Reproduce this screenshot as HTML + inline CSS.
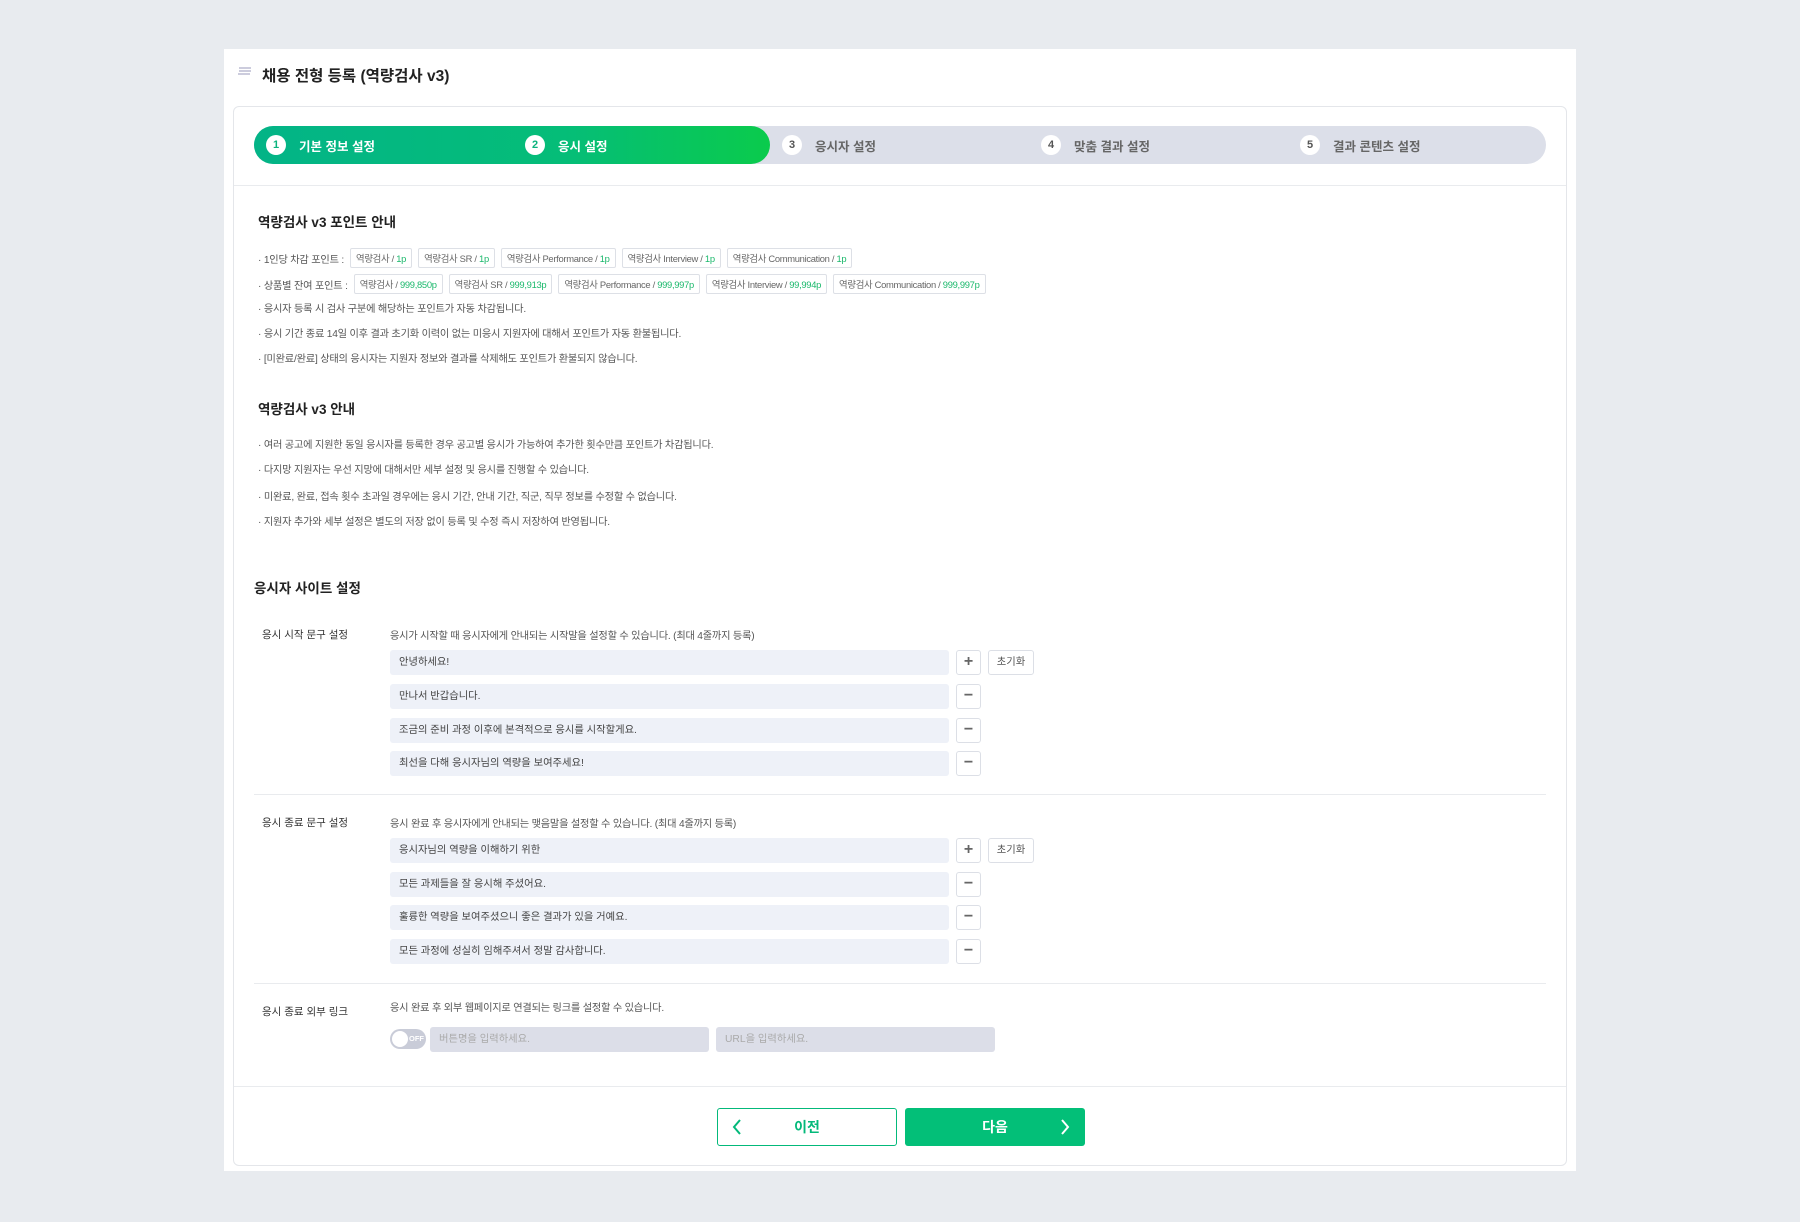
<!DOCTYPE html>
<html><head><meta charset="utf-8"><style>
*{box-sizing:border-box;margin:0;padding:0}
body{width:1800px;height:1222px;background:#e8ebef;font-family:"Liberation Sans","Noto Sans CJK KR",sans-serif;color:#333;position:relative;overflow:hidden}
.a{position:absolute}
.card{left:224px;top:49px;width:1352px;height:1122px;background:#fff}
.inner{left:233px;top:106px;width:1334px;height:1060px;border:1px solid #e4e6ea;border-radius:6px;background:#fff}
.step{top:126px;height:38px;display:flex;align-items:center;font-size:12.5px;font-weight:bold}
.circ{width:20px;height:20px;border-radius:50%;background:#fff;font-size:11px;font-weight:bold;display:flex;align-items:center;justify-content:center;margin-right:13px}
.h{font-size:13.5px;font-weight:bold;color:#222}
.ln{font-size:10.2px;color:#555;white-space:nowrap;display:flex;align-items:center;letter-spacing:-0.2px}
.tag{border:1px solid #dde0e6;border-radius:2px;padding:2px 5px;margin-left:6px;font-size:9.4px;color:#666;letter-spacing:-0.3px}
.g{color:#1ab86b}
.lab{font-size:10.5px;color:#333;left:262px}
.desc{font-size:10.2px;color:#555;left:390px;letter-spacing:-0.2px}
.inp{left:390px;width:559px;height:25px;background:#eef1f8;border-radius:3px;font-size:10.3px;color:#444;padding-left:9px;line-height:25px}
.pb{left:956px;width:25px;height:25px;border:1px solid #dcdfe6;border-radius:3px;background:#fff;text-align:center;line-height:22px;font-size:16px;color:#666;font-weight:bold}
.rb{left:988px;width:46px;height:25px;border:1px solid #dcdfe6;border-radius:3px;background:#fff;text-align:center;line-height:23px;font-size:10.3px;color:#555}
.hr{height:1px;background:#e9ebee}
</style></head><body>
<div class="a card"></div>
<div class="a" style="left:239px;top:67px;width:12px;height:1.5px;background:#ccd;box-shadow:0 3px 0 #ccd,-1px 6px 0 #ccd"></div>
<div class="a" style="left:262px;top:64px;font-size:15.5px;font-weight:bold;color:#222">채용 전형 등록 (역량검사 v3)</div>
<div class="a inner"></div>
<div class="a" style="left:254px;top:126px;width:1292px;height:38px;border-radius:19px;background:#dcdfe9"></div>
<div class="a" style="left:254px;top:126px;width:516px;height:38px;border-radius:19px;background:linear-gradient(90deg,#03b487 0%,#05bd78 60%,#0acb4c 100%)"></div>
<div class="a step" style="left:266px;color:#fff"><span class="circ" style="color:#0bb37d">1</span>기본 정보 설정</div>
<div class="a step" style="left:525px;color:#fff"><span class="circ" style="color:#0bb37d">2</span>응시 설정</div>
<div class="a step" style="left:782px;color:#666"><span class="circ" style="color:#555">3</span>응시자 설정</div>
<div class="a step" style="left:1041px;color:#666"><span class="circ" style="color:#555">4</span>맞춤 결과 설정</div>
<div class="a step" style="left:1300px;color:#666"><span class="circ" style="color:#555">5</span>결과 콘텐츠 설정</div>
<div class="a hr" style="left:234px;top:185px;width:1332px"></div>

<div class="a h" style="left:258px;top:211px">역량검사 v3 포인트 안내</div>
<div class="a ln" style="left:258px;top:248px">· 1인당 차감 포인트 : <span class="tag">역량검사 / <span class="g">1p</span></span><span class="tag">역량검사 SR / <span class="g">1p</span></span><span class="tag">역량검사 Performance / <span class="g">1p</span></span><span class="tag">역량검사 Interview / <span class="g">1p</span></span><span class="tag">역량검사 Communication / <span class="g">1p</span></span></div>
<div class="a ln" style="left:258px;top:274px">· 상품별 잔여 포인트 : <span class="tag">역량검사 / <span class="g">999,850p</span></span><span class="tag">역량검사 SR / <span class="g">999,913p</span></span><span class="tag">역량검사 Performance / <span class="g">999,997p</span></span><span class="tag">역량검사 Interview / <span class="g">99,994p</span></span><span class="tag">역량검사 Communication / <span class="g">999,997p</span></span></div>
<div class="a ln" style="left:258px;top:300px">· 응시자 등록 시 검사 구분에 해당하는 포인트가 자동 차감됩니다.</div>
<div class="a ln" style="left:258px;top:325px">· 응시 기간 종료 14일 이후 결과 초기화 이력이 없는 미응시 지원자에 대해서 포인트가 자동 환불됩니다.</div>
<div class="a ln" style="left:258px;top:350px">· [미완료/완료] 상태의 응시자는 지원자 정보와 결과를 삭제해도 포인트가 환불되지 않습니다.</div>

<div class="a h" style="left:258px;top:398px">역량검사 v3 안내</div>
<div class="a ln" style="left:258px;top:436px">· 여러 공고에 지원한 동일 응시자를 등록한 경우 공고별 응시가 가능하여 추가한 횟수만큼 포인트가 차감됩니다.</div>
<div class="a ln" style="left:258px;top:461px">· 다지망 지원자는 우선 지망에 대해서만 세부 설정 및 응시를 진행할 수 있습니다.</div>
<div class="a ln" style="left:258px;top:488px">· 미완료, 완료, 접속 횟수 초과일 경우에는 응시 기간, 안내 기간, 직군, 직무 정보를 수정할 수 없습니다.</div>
<div class="a ln" style="left:258px;top:513px">· 지원자 추가와 세부 설정은 별도의 저장 없이 등록 및 수정 즉시 저장하여 반영됩니다.</div>

<div class="a h" style="left:254px;top:577px">응시자 사이트 설정</div>

<div class="a lab" style="top:627px">응시 시작 문구 설정</div>
<div class="a desc" style="top:627px">응시가 시작할 때 응시자에게 안내되는 시작말을 설정할 수 있습니다. (최대 4줄까지 등록)</div>
<div class="a inp" style="top:650px">안녕하세요!</div><div class="a pb" style="top:650px">+</div><div class="a rb" style="top:650px">초기화</div>
<div class="a inp" style="top:684px">만나서 반갑습니다.</div><div class="a pb" style="top:684px">−</div>
<div class="a inp" style="top:718px">조금의 준비 과정 이후에 본격적으로 응시를 시작할게요.</div><div class="a pb" style="top:718px">−</div>
<div class="a inp" style="top:751px">최선을 다해 응시자님의 역량을 보여주세요!</div><div class="a pb" style="top:751px">−</div>
<div class="a hr" style="left:254px;top:794px;width:1292px"></div>

<div class="a lab" style="top:815px">응시 종료 문구 설정</div>
<div class="a desc" style="top:815px">응시 완료 후 응시자에게 안내되는 맺음말을 설정할 수 있습니다. (최대 4줄까지 등록)</div>
<div class="a inp" style="top:838px">응시자님의 역량을 이해하기 위한</div><div class="a pb" style="top:838px">+</div><div class="a rb" style="top:838px">초기화</div>
<div class="a inp" style="top:872px">모든 과제들을 잘 응시해 주셨어요.</div><div class="a pb" style="top:872px">−</div>
<div class="a inp" style="top:905px">훌륭한 역량을 보여주셨으니 좋은 결과가 있을 거예요.</div><div class="a pb" style="top:905px">−</div>
<div class="a inp" style="top:939px">모든 과정에 성실히 임해주셔서 정말 감사합니다.</div><div class="a pb" style="top:939px">−</div>
<div class="a hr" style="left:254px;top:983px;width:1292px"></div>

<div class="a lab" style="top:1004px">응시 종료 외부 링크</div>
<div class="a desc" style="top:999px">응시 완료 후 외부 웹페이지로 연결되는 링크를 설정할 수 있습니다.</div>
<div class="a" style="left:390px;top:1029px;width:36px;height:20px;border-radius:10px;background:#c9ccd8"></div>
<div class="a" style="left:392px;top:1031px;width:16px;height:16px;border-radius:50%;background:#fff"></div>
<div class="a" style="left:409px;top:1034px;font-size:7.5px;font-weight:bold;color:#fff">OFF</div>
<div class="a inp" style="left:430px;top:1027px;width:279px;background:#dcdee8;color:#aaa">버튼명을 입력하세요.</div>
<div class="a inp" style="left:716px;top:1027px;width:279px;background:#dcdee8;color:#aaa">URL을 입력하세요.</div>

<div class="a hr" style="left:234px;top:1086px;width:1332px"></div>
<div class="a" style="left:717px;top:1108px;width:180px;height:38px;border:1px solid #03b97a;border-radius:3px;background:#fff;color:#03b97a;font-weight:bold;font-size:14px;text-align:center;line-height:36px">이전</div>
<svg class="a" style="left:730px;top:1118px" width="14" height="18"><path d="M10 2 L4 9 L10 16" stroke="#03b97a" stroke-width="2" fill="none"/></svg>
<div class="a" style="left:905px;top:1108px;width:180px;height:38px;border-radius:3px;background:#03bf78;color:#fff;font-weight:bold;font-size:14px;text-align:center;line-height:38px">다음</div>
<svg class="a" style="left:1058px;top:1118px" width="14" height="18"><path d="M4 2 L10 9 L4 16" stroke="#fff" stroke-width="2" fill="none"/></svg>
</body></html>
